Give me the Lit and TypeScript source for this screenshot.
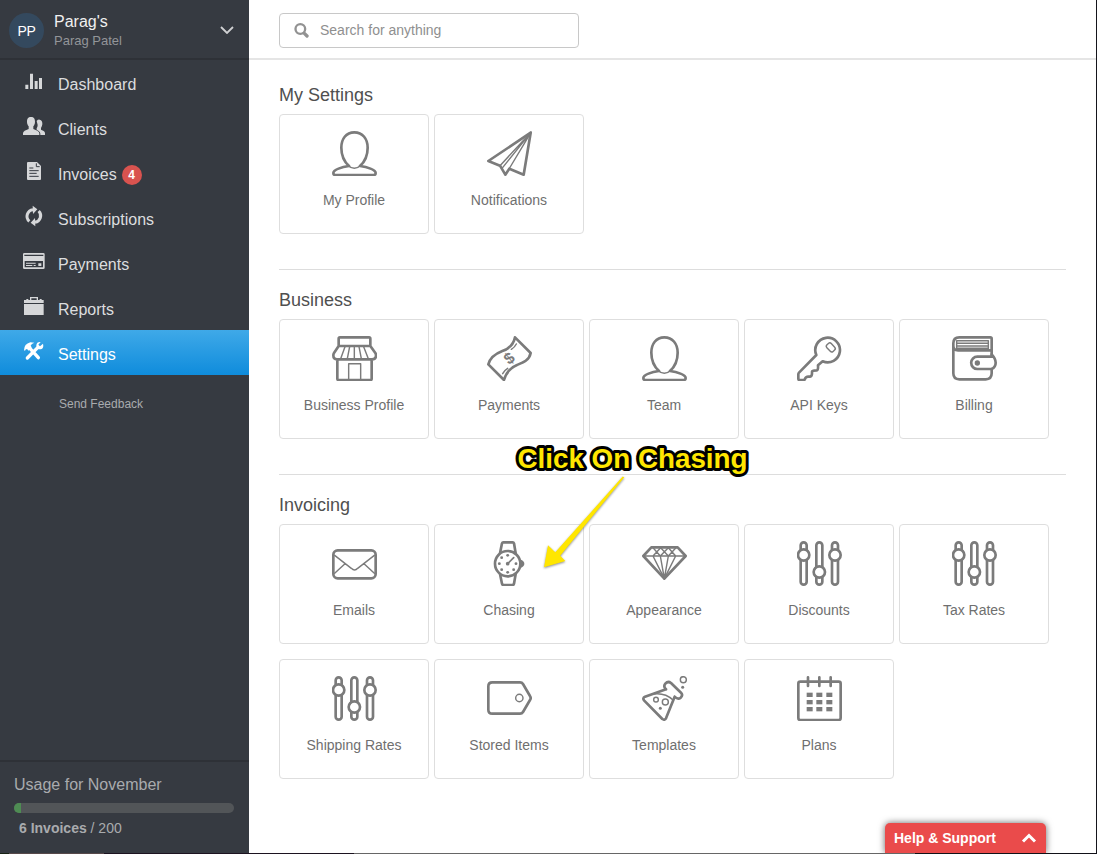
import { LitElement, html, svg, css } from "lit";
import { customElement, property } from "lit/decorators.js";

const sliders = svg`
  <rect x="11" y="4" width="18" height="127" rx="9"/><rect x="58" y="4" width="18" height="127" rx="9"/><rect x="105" y="4" width="18" height="127" rx="9"/>
  <circle class="w" cx="20" cy="42" r="17"/><circle class="w" cx="67" cy="93" r="17"/><circle class="w" cx="114" cy="42" r="17"/>`;

const person = svg`
  <path d="M67 4C42 4 28 24 28 50c0 25 11 44 23 55C30 108 4 116 4 126q0 6 6 6h115q6 0 6-6c0-10-26-18-47-21 12-11 23-30 23-55C107 24 92 4 67 4z"/>
  <path class="t" d="M49 104q18 16 36 0"/>`;

const icons: Record<string, unknown> = {
  person,
  sliders,
  plane: svg`<path d="M131 5L4 90l35 14 16 27 12-18 43 18z"/><path class="t" d="M132 4L39 104M132 4L45 112M132 4L66 114"/>`,
  store: svg`<path d="M20 30V8q0-4 4-4h87q4 0 4 4v22M20 30h95L130 51q2 3 2 7 0 12-12 12H15Q4 70 4 58q0-4 2-7zM16 70v58q0 4 4 4h95q4 0 4-4V70"/>
    <path class="t" d="M50 132V83h36v49M39 32L26 68M53 32L46 68M67 32V68M81 32L88 68M95 32L109 68"/>`,
  money: svg`<path d="M84 4L131 51C127 73 108 80 90 87 70 95 58 108 51 132L4 85C10 62 28 52 46 45 66 38 80 26 84 4z"/>
    <path class="t" d="M88 24q-5 10-15 16M47 113q5-10 15-16"/><text x="67" y="83" transform="rotate(-38 67 67)">$</text>`,
  key: svg`<path d="M58 57A37 37 0 1 1 77 76L63 88q1 14-4 15-14 0-14 4 1 14-6 15-13-2-15 7-1 3-5 3H8q-4 0-4-4V115q0-3 2-5z"/>
    <rect class="t" x="92" y="21" width="18" height="27" rx="6" transform="rotate(-43 101 34)"/>`,
  wallet: svg`<path d="M119 62V8q0-4-4-4H22Q4 4 4 22v90q0 18 18 18h79q18 0 18-18V99M4 30q0 13 14 13H119"/>
    <path class="t" d="M14 38V14H109V40M14 22h94M14 30h94M14 37h94"/>
    <path d="M119 62H76a18.5 18.5 0 0 0 0 37h43q12-6 12-19 0-12-12-25"/><circle class="f" cx="76" cy="81" r="8"/>`,
  mail: svg`<rect x="4" y="28" width="127" height="84" rx="13"/><path class="t" d="M8 43L58 82q10 10 19 0L127 43M8 97l31-29M127 97L96 68"/>`,
  watch: svg`<path d="M39 37L45 7q1-3 4-3h28q3 0 4 3l5 30M39 99l6 29q1 4 4 4h28q3 0 4-4l5-29"/><circle class="w" cx="62" cy="68" r="38"/>
    <path class="f" d="M102 56q10 4 10 12t-10 12z"/><path class="m" d="M62 68L80 50"/>
    <g class="f"><circle cx="62" cy="68" r="5.5"/><circle cx="62" cy="43" r="4.3"/><circle cx="62" cy="94" r="4.3"/><circle cx="37" cy="68" r="4.3"/><circle cx="87" cy="68" r="4.3"/><circle cx="44" cy="50" r="4.3"/><circle cx="44" cy="86" r="4.3"/><circle cx="80" cy="86" r="4.3"/></g>`,
  diamond: svg`<path d="M28 19h79L131 45 67 113 4 45z"/>
    <path class="t" d="M4 45H131M67 113L33 45 56 20M67 113L55 45 33 20M67 113L79 45 56 20M67 113L101 45 79 20M55 45L79 20M79 45L102 20"/>`,
  tag: svg`<path d="M16 19H99q6 0 9 5l21 36q4 6 0 12l-21 36q-3 5-9 5H16Q4 113 4 101V31Q4 19 16 19z"/><circle class="t" cx="97" cy="66" r="11"/>`,
  flask: svg`<path d="M72 40L9 62q-8 4-3 11L61 129q7 5 11-2L98 62M72 40q-9-8-2-17 8-9 17-2L117 50q7 8-1 15-8 7-18-3"/>
    <path class="t" d="M35 54Q70 50 93 72"/><circle class="t" cx="42" cy="71" r="7"/><circle class="t" cx="70" cy="78" r="9"/><circle class="t" cx="124" cy="11" r="9"/>
    <g class="f"><circle cx="55" cy="97" r="4.5"/><circle cx="122" cy="34" r="4.5"/></g>`,
  calendar: svg`<rect x="4" y="17" width="127" height="115" rx="6"/><path d="M33 4v26M67 4v26M101 4v26"/>
    <g class="f">${[29, 58, 88].map((x) => [50, 72, 93].map((y) => svg`<rect x=${x} y=${y} width="18" height="13"/>`))}</g>`,
};

@customElement("settings-tile")
class SettingsTile extends LitElement {
  @property() icon = "";
  @property() label = "";
  static styles = css`
    :host { display: flex; flex-direction: column; align-items: center; box-sizing: border-box; width: 150px; height: 120px;
      padding-top: 16px; border: 1px solid #dedede; border-radius: 4px; background: #fff; }
    svg { display: block; width: 45px; height: 45px; fill: none; stroke: #7b7b7b; stroke-width: 8; stroke-linecap: round; stroke-linejoin: round; }
    .t { stroke-width: 4.3; }
    .m { stroke-width: 5; }
    .w { fill: #fff; }
    .f { fill: #7b7b7b; stroke: none; }
    text { fill: #7b7b7b; stroke: none; font: bold 48px "Liberation Sans", sans-serif; text-anchor: middle; }
    .label { margin-top: 16px; font-size: 14px; line-height: 16px; color: #6f6f6f; white-space: nowrap; }
  `;
  render() {
    return html`<svg viewBox="0 0 135 135">${icons[this.icon]}</svg><div class="label">${this.label}</div>`;
  }
}

const nav = [
  { label: "Dashboard", icon: svg`<path d="M7 44h9v13H7zM21 11h9v46h-9zM35 33h9v24h-9zM48 24h9v33h-9z"/>` },
  { label: "Clients", icon: svg`<path d="M41 18q4-5 9-4 9 2 8 14-1 7-4 11v5l8 4q4 2 4 7v5H52v-4q0-5-5-8l-6-4v-4q3-4 3-10z"/><path d="M24 6c9 0 12 6 12 14 0 6-2 10-5 14v8l12 5q6 3 6 8v5H0v-5q0-5 5-8l12-5v-8c-3-4-5-8-5-14C12 12 15 6 24 6z"/>` },
  { label: "Invoices", badge: "4", icon: svg`<path d="M15 6H42L54 18V57q0 3-3 3H15q-3 0-3-3V9q0-3 3-3z"/><path class="cut" d="M40 10v10h10M19 24h12M19 32h28M19 40h22M19 49h28"/>` },
  { label: "Subscriptions", icon: svg`<path class="ring" d="M19 49A20 20 0 0 1 30 14M47 18A20 20 0 0 1 36 52"/><path d="M29 2L43 13 30 27zM37 64L23 53 36 39z"/>` },
  { label: "Payments", icon: svg`<path fill-rule="evenodd" d="M4 9H61q4 0 4 4V53q0 4-4 4H4q-4 0-4-4V13Q0 9 4 9zM4 14v4H61V14zM5 33V52H60V33z"/><path d="M9 38h29v3H9zM9 45h19v3H9zM32 45h6v3h-6zM46 40h9v8h-9z"/>` },
  { label: "Reports", icon: svg`<path d="M3 27H62V60H3zM3 15H10v-3h6v3H50v-3h6v3h6V24H3z"/><path class="handle" d="M23 15V8H43v7"/>` },
  { label: "Settings", active: true, icon: svg`<path class="tool" d="M16 20L46 53M13 54L44 23"/><path d="M3 31Q3 12 22 7l12 1q-9 3-11 9l3 5-9 10-5-5q-5 1-6 5zM60 11l-9 8-5-5 7-8Q41 5 40 16q-1 6 4 10 5 3 12 1 7-4 4-16z"/>` },
];

const sections = [
  { title: "My Settings", tiles: [["person", "My Profile"], ["plane", "Notifications"]] },
  { title: "Business", tiles: [["store", "Business Profile"], ["money", "Payments"], ["person", "Team"], ["key", "API Keys"], ["wallet", "Billing"]] },
  { title: "Invoicing", tiles: [["mail", "Emails"], ["watch", "Chasing"], ["diamond", "Appearance"], ["sliders", "Discounts"], ["sliders", "Tax Rates"], ["sliders", "Shipping Rates"], ["tag", "Stored Items"], ["flask", "Templates"], ["calendar", "Plans"]] },
];

@customElement("app-root")
class AppRoot extends LitElement {
  static styles = css`
    :host { display: flex; flex-direction: column; position: relative; width: 1097px; height: 854px; overflow: hidden; background: #fff;
      font-family: "Liberation Sans", Arial, sans-serif; }
    .window { display: flex; flex: 1; min-height: 0; box-sizing: border-box; border-right: 1px solid #15151c; }
    .desk { height: 1px; background: linear-gradient(90deg, #182214 0 9px, #57494a 9px 104px, #1c1320 104px 354px, #666 354px 915px, #111118 915px); }
    aside { display: flex; flex-direction: column; width: 249px; background: #363a41; color: #dcdddf; }
    .account { display: flex; align-items: center; box-sizing: border-box; height: 60px; padding: 2px 15px 0 9px; border-bottom: 2px solid #2e3137; }
    .avatar { width: 35px; height: 35px; margin-right: 10px; border-radius: 50%; background: #34495e; color: #fff; font-size: 14px; line-height: 37px; text-align: center; letter-spacing: -.4px; }
    .who { flex: 1; }
    .company { font-size: 16px; line-height: 20px; color: #f0f0f0; }
    .user { font-size: 13px; line-height: 17px; color: #939599; }
    .chev { width: 14px; height: 8px; fill: none; stroke: #d0d1d3; stroke-width: 1.8; }
    .row { display: flex; align-items: flex-start; height: 45px; box-sizing: border-box; padding: 10px 0 0 23px; font-size: 16px; }
    .row svg { width: 22px; height: 22px; fill: #d6d7d9; }
    .row span { margin-left: 13px; padding-top: 5px; line-height: 20px; }
    .row.active { background: linear-gradient(#3fa9e8, #0f8cdc); color: #fff; }
    .row.active svg { fill: #fff; }
    .cut { fill: none; stroke: #363a41; stroke-width: 3; }
    .ring { fill: none; stroke: #d6d7d9; stroke-width: 9; }
    .handle { fill: none; stroke: #d6d7d9; stroke-width: 4; }
    .tool { fill: none; stroke: #fff; stroke-width: 10; stroke-linecap: round; }
    .badge { width: 20px; height: 20px; margin: 5px 0 0 5px; border-radius: 50%; background: #d9534f; color: #fff; font-weight: bold; font-size: 12px; line-height: 21px; text-align: center; }
    .feedback { margin: 21px 0 0 59px; font-size: 12px; line-height: 16px; color: #a9abae; }
    .usage { margin-top: auto; box-sizing: border-box; height: 93px; padding: 13px 15px 0 14px; border-top: 2px solid #2e3137; color: #a9abae; }
    .usage-title { font-size: 16px; line-height: 20px; }
    .bar { display: flex; height: 10px; margin: 8px 0 7px; border-radius: 5px; overflow: hidden; background: #525558; }
    .fill { background: #4e8c53; }
    .count { padding-left: 5px; font-size: 14px; line-height: 16px; }
    main { flex: 1; display: flex; flex-direction: column; }
    header { box-sizing: border-box; height: 60px; padding: 13px 30px 0; border-bottom: 2px solid #e5e5e5; }
    .search { display: flex; align-items: center; box-sizing: border-box; width: 300px; height: 35px; padding: 0 0 1px 14px; border: 1px solid #c8c8c8; border-radius: 4px; font-size: 14px; line-height: 16px; color: #8f8f8f; }
    .search svg { width: 15px; height: 15px; margin-right: 11px; fill: none; stroke: #929292; stroke-linecap: round; }
    .content { padding: 5px 30px 0; }
    section { border-bottom: 1px solid #ddd; padding-bottom: 20px; }
    section:last-child { border: 0; }
    h2 { margin: 0; padding-top: 20px; height: 29px; font-size: 18px; line-height: 20px; font-weight: 400; color: #4f4f4f; }
    .tiles { display: flex; flex-wrap: wrap; gap: 15px 5px; padding-bottom: 15px; }
    .help { position: absolute; right: 51px; bottom: 1px; display: flex; justify-content: space-between; align-items: center; box-sizing: border-box; width: 161px; height: 30px; padding: 0 9px;
      border-radius: 5px 5px 0 0; background: #ea4b4b; color: #fff; font-size: 14px; font-weight: bold; box-shadow: 0 0 7px rgba(0, 0, 0, .6); clip-path: inset(-12px -12px 0 -12px); }
    .help svg { width: 16px; height: 10px; fill: none; stroke: #fff; stroke-width: 3; }
    .note { position: absolute; left: 500px; top: 435px; width: 260px; height: 150px; }
    .note text { font-size: 27.2px; font-weight: bold; fill: #ffe600; stroke: #000; stroke-width: 6; stroke-linejoin: round; paint-order: stroke; }
    .arrow { fill: #ffe600; filter: drop-shadow(0 1px 1px rgba(0, 0, 0, .45)); }
  `;

  render() {
    return html`
      <div class="window">
        <aside>
          <div class="account">
            <div class="avatar">PP</div>
            <div class="who"><div class="company">Parag's</div><div class="user">Parag Patel</div></div>
            <svg class="chev" viewBox="0 0 14 8"><path d="M1 1l6 6 6-6"/></svg>
          </div>
          <nav>
            ${nav.map((n) => html`<div class="row ${n.active ? "active" : ""}"><svg viewBox="0 0 66 66">${n.icon}</svg><span>${n.label}</span>${n.badge ? html`<div class="badge">${n.badge}</div>` : ""}</div>`)}
          </nav>
          <div class="feedback">Send Feedback</div>
          <div class="usage">
            <div class="usage-title">Usage for November</div>
            <div class="bar"><div class="fill" style="width:${(6 / 200) * 100}%"></div></div>
            <div class="count"><b>6 Invoices</b> / 200</div>
          </div>
        </aside>
        <main>
          <header>
            <div class="search"><svg viewBox="0 0 45 45"><circle cx="19" cy="18" r="14.5" stroke-width="7"/><path d="M31 31l8 8" stroke-width="10"/></svg>Search for anything</div>
          </header>
          <div class="content">
            ${sections.map((s) => html`<section><h2>${s.title}</h2><div class="tiles">${s.tiles.map(([i, l]) => html`<settings-tile icon=${i} label=${l}></settings-tile>`)}</div></section>`)}
          </div>
        </main>
      </div>
      <div class="desk"></div>
      <svg class="note" viewBox="0 0 260 150">
        <path class="arrow" d="M124.3 42.3L60.2 120.7 65.3 126 44 132.3 48 110.3 55.3 117.3 122.7 41.5z"/>
        <text x="17.5" y="32.5" textLength="230" lengthAdjust="spacingAndGlyphs">Click On Chasing</text>
      </svg>
      <div class="help">Help &amp; Support<svg viewBox="0 0 16 10"><path d="M2 8.5l6-6 6 6"/></svg></div>
    `;
  }
}
